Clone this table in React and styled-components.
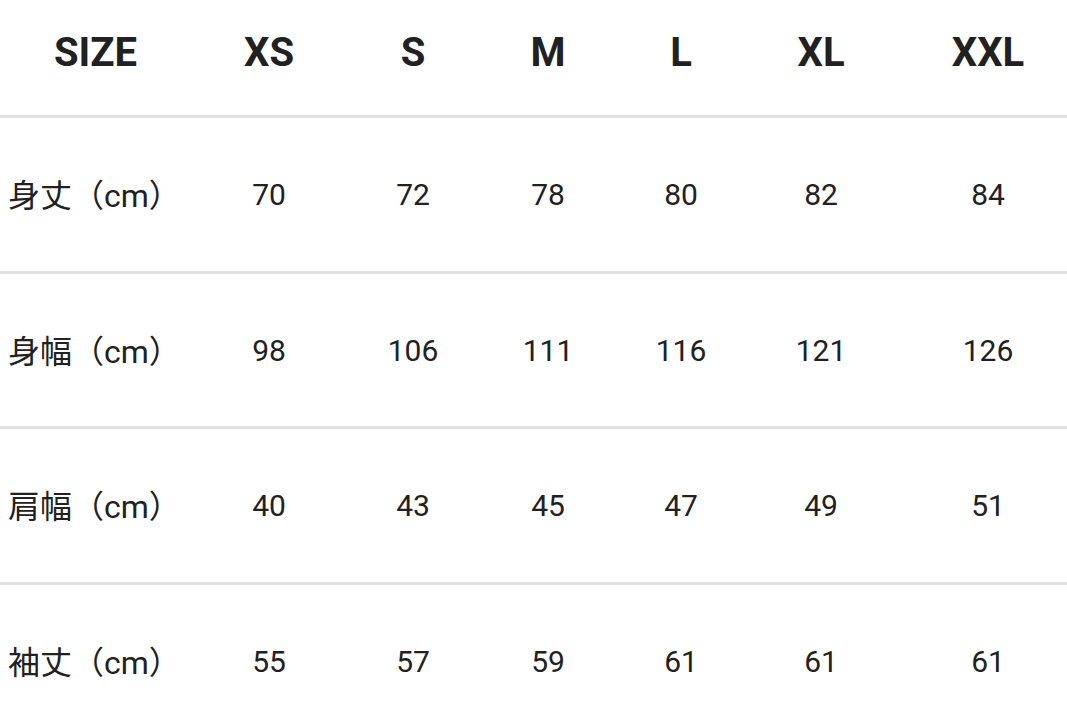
import styled, { createGlobalStyle } from "styled-components";

const GlobalStyle = createGlobalStyle`
    html, body {
        margin: 0;
        padding: 0;
        background: #ffffff;
        overflow: hidden;
    }
    body {
        font-family: Roboto, "Noto Sans CJK JP", sans-serif;
        color: #212121;
    }
`;

const columns = "191px 156px 132px 138px 128px 152px 1fr";

const Table = styled.div`
    width: 1067px;
    display: flex;
    flex-direction: column;
`;

const Row = styled.div`
    display: grid;
    grid-template-columns: ${columns};
    align-items: center;
    box-sizing: border-box;
    height: ${({ $header }) => ($header ? "118px" : "155.7px")};
    padding-bottom: ${({ $header }) => ($header ? "10px" : "0")};
    border-bottom: 3px solid #e0e0e0;
`;

const Cell = styled.div`
    text-align: center;
    padding-left: ${({ $last }) => ($last ? "12px" : "0")};
    font-size: ${({ $header }) => ($header ? "40px" : "30px")};
    font-weight: ${({ $header }) => ($header ? 700 : 400)};
    color: #212121;
    white-space: nowrap;
`;

const Label = styled.div`
    padding-left: 8px;
    padding-bottom: 3px;
    font-size: 32px;
    color: #212121;
    white-space: nowrap;
`;

const sizes = ["XS", "S", "M", "L", "XL", "XXL"];

const rows = [
    { label: "身丈（cm）", values: [70, 72, 78, 80, 82, 84] },
    { label: "身幅（cm）", values: [98, 106, 111, 116, 121, 126] },
    { label: "肩幅（cm）", values: [40, 43, 45, 47, 49, 51] },
    { label: "袖丈（cm）", values: [55, 57, 59, 61, 61, 61] },
];

const App = () => {
    return (
        <>
            <GlobalStyle />
            <Table>
                <Row $header>
                    <Cell $header>SIZE</Cell>
                    {sizes.map((s, i) => (
                        <Cell $header $last={i === sizes.length - 1} key={s}>
                            {s}
                        </Cell>
                    ))}
                </Row>
                {rows.map(row => (
                    <Row key={row.label}>
                        <Label>{row.label}</Label>
                        {row.values.map((v, i) => (
                            <Cell $last={i === row.values.length - 1} key={i}>
                                {v}
                            </Cell>
                        ))}
                    </Row>
                ))}
            </Table>
        </>
    );
};

export default App;
